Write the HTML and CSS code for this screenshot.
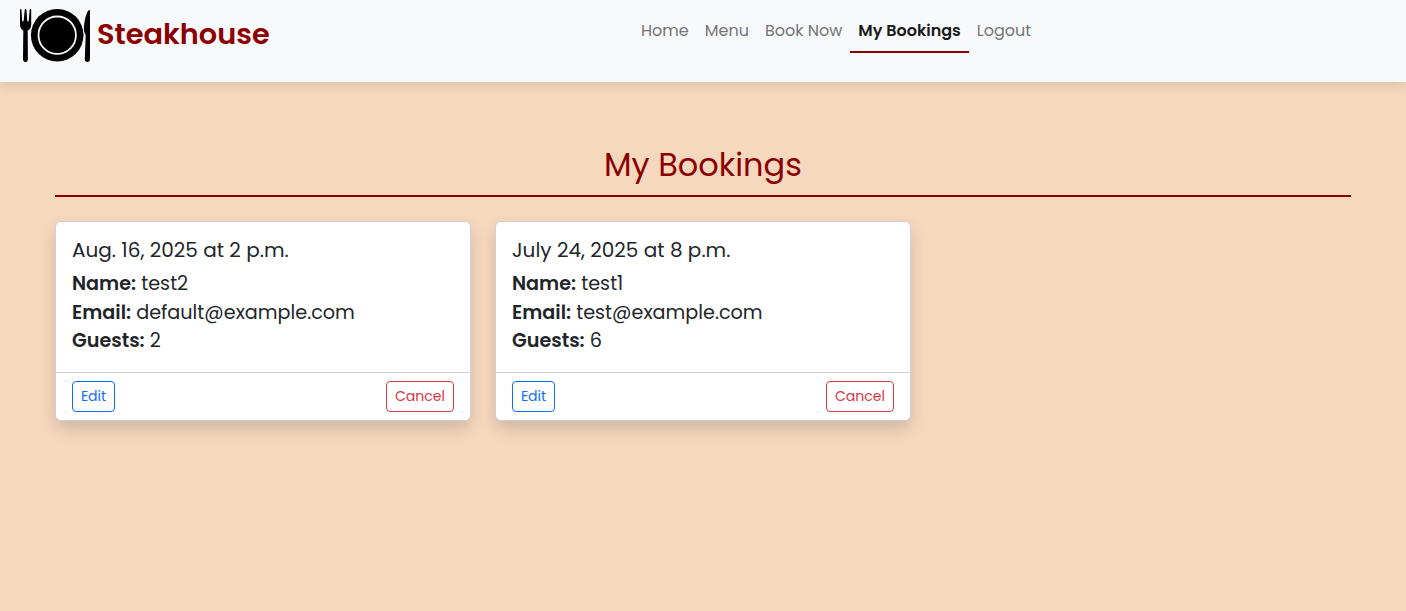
FILE: index.html
```html
<!DOCTYPE html>
<html lang="en">
<head>
<meta charset="utf-8">
<title>Steakhouse - My Bookings</title>
<link rel="stylesheet" href="styles.css">
</head>
<body>
<header class="navbar">
  <a class="brand">
    <svg class="logo" viewBox="0 0 70 54" width="70" height="54" aria-hidden="true">
      <path d="M0 1Q0 0 .7 0t.8 1l.6 10.500q.1 1 .8 1t.8-1L4.700 1q.1-1 .9-1t.9 1l.7 10.500q.1 1 .8 1t.8-1L9.600 1q.1-1 .8-1t.8 1v14q0 5-3.500 6.600l.2 28.400q0 3-2.400 3T3 50l.3-28.400Q0 20 0 15z"/>
      <circle cx="37.200" cy="26.200" r="26.300"/>
      <circle cx="37.200" cy="26.200" r="18.700" fill="none" stroke="#f8f9fb" stroke-width="1.800"/>
      <path d="M70 2Q70 .8 68.900 1.100C65.800 4 64.100 13 63.900 20q-.1 3.500 1.800 6L64.800 50q0 3 2.600 3T70 50z"/>
    </svg>
    <span class="brand-name">Steakhouse</span>
  </a>
  <nav class="nav">
    <a class="nav-link">Home</a>
    <a class="nav-link">Menu</a>
    <a class="nav-link">Book Now</a>
    <a class="nav-link active">My Bookings</a>
    <a class="nav-link">Logout</a>
  </nav>
</header>
<main class="container">
  <h1 class="title">My Bookings</h1>
  <div class="cards">
    <article class="card">
      <div class="card-body">
        <h2 class="card-title">Aug. 16, 2025 at 2 p.m.</h2>
        <p class="card-text"><strong>Name:</strong> test2<br><strong>Email:</strong> default@example.com<br><strong>Guests:</strong> 2</p>
      </div>
      <div class="card-footer"><a class="btn edit">Edit</a><a class="btn cancel">Cancel</a></div>
    </article>
    <article class="card">
      <div class="card-body">
        <h2 class="card-title">July 24, 2025 at 8 p.m.</h2>
        <p class="card-text"><strong>Name:</strong> test1<br><strong>Email:</strong> test@example.com<br><strong>Guests:</strong> 6</p>
      </div>
      <div class="card-footer"><a class="btn edit">Edit</a><a class="btn cancel">Cancel</a></div>
    </article>
  </div>
</main>
</body>
</html>
```
FILE: styles.css
```css
* { box-sizing: border-box; }
body { margin: 0; min-height: 611px; background: #f6d8be; color: #212529; font-family: Poppins, Inter, sans-serif; font-size: 16px; line-height: 1.5; }
.navbar { display: grid; grid-template-columns: 613px auto; height: 82px; padding: 9px 20px; align-items: start; background: #f8f9fb; box-shadow: 0 4px 12px rgba(0,0,0,.11); }
.brand { display: flex; gap: 7px; }
.logo { display: block; overflow: visible; }
.brand-name { color: #8b0000; font-size: 28.8px; font-weight: 600; line-height: 50px; }
.nav { display: flex; }
.nav-link { height: 44px; padding: 10px 8px 8px; color: #747576; white-space: nowrap; }
.nav-link.active { color: #191919; font-weight: 600; border-bottom: 2px solid #8b0000; }
.container { width: 1296px; margin: 62px auto 0; }
.title { margin: 0 0 24px; height: 53px; border-bottom: 2px solid #8b0000; text-align: center; color: #8b0000; font-size: 32px; font-weight: 400; line-height: 42px; }
.cards { display: grid; grid-template-columns: repeat(3, 416px); gap: 24px; }
.card { height: 200px; border: 1px solid #d1d1d1; border-radius: 6px; background: #fff; box-shadow: 0 8px 16px rgba(0,0,0,.15); }
.card-body { height: 150px; padding: 16px; }
.card-title { margin: 0 0 8px; font-size: 20px; line-height: 24px; font-weight: 400; }
.card-text { margin: 0; font-size: 19.2px; line-height: 28.6px; white-space: nowrap; }
.card-text strong { font-weight: 600; }
.card-footer { height: 48px; padding: 8px 16px; border-top: 1px solid #d1d1d1; display: flex; justify-content: space-between; }
.btn { height: 31px; border: 1px solid; border-radius: 4px; text-align: center; font-size: 14px; line-height: 29px; }
.edit { width: 43px; color: #0d6efd; }
.cancel { width: 68px; color: #dc3545; }
```
